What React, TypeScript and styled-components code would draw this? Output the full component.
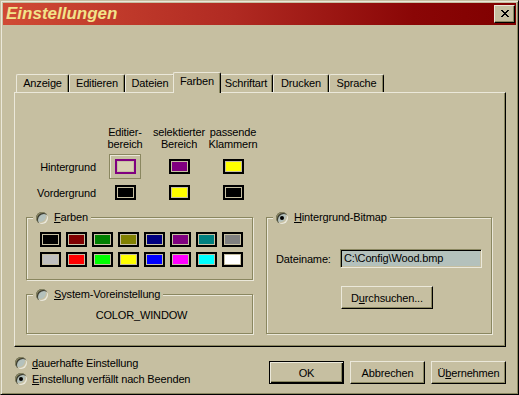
import React from 'react';
import styled, { createGlobalStyle, css } from 'styled-components';

const C = {
  face: '#c6bfa1',
  hi: '#ebe8da',
  shadow: '#8a8760',
  dark: '#000000',
  field: '#b4c1bc',
};

const Global = createGlobalStyle`
  html, body { margin: 0; padding: 0; background: ${C.face}; }
  body { font-family: "Liberation Sans", Arial, sans-serif; font-size: 11px; letter-spacing: -0.15px; color: #000; }
  * { box-sizing: border-box; }
`;

const Window = styled.div`
  width: 519px;
  height: 395px;
  background: ${C.face};
  border: 1px solid;
  border-color: ${C.face} ${C.dark} ${C.dark} ${C.face};
  box-shadow: inset 1px 1px 0 ${C.hi}, inset -1px -1px 0 ${C.shadow};
  padding: 2px;
  display: flex;
  flex-direction: column;
`;

const TitleBar = styled.div`
  height: 22px;
  flex: none;
  display: flex;
  align-items: center;
  justify-content: space-between;
  padding: 0 1px 0 3px;
  background: linear-gradient(90deg, #d04a34 0%, #b02a22 45%, #8a0606 80%, #800000 100%);
`;

const Title = styled.span`
  font-family: "Liberation Sans", Arial, sans-serif;
  font-weight: bold;
  font-style: italic;
  font-size: 17px;
  letter-spacing: 0;
  color: #f2e38a;
  line-height: 22px;
`;

const RaisedBase = css`
  background: ${C.face};
  border: 1px solid;
  border-color: ${C.hi} ${C.dark} ${C.dark} ${C.hi};
  box-shadow: inset -1px -1px 0 ${C.shadow};
`;

const CloseButton = styled.div`
  ${RaisedBase};
  width: 21px;
  height: 18px;
  display: flex;
  align-items: center;
  justify-content: center;
  padding-bottom: 1px;
`;

const Body = styled.div`
  flex: 1;
  display: flex;
  flex-direction: column;
  padding: 47px 10px 0 11px;
`;

const TabRow = styled.div`
  display: flex;
  align-items: flex-end;
  height: 20px;
  padding-left: 2px;
`;

const Tab = styled.div<{ $w: number; $active?: boolean }>`
  width: ${(p) => p.$w}px;
  height: 18px;
  flex: none;
  background: ${C.face};
  border-top: 1px solid ${C.hi};
  border-left: 1px solid ${C.hi};
  border-right: 1px solid ${C.dark};
  border-radius: 2px 2px 0 0;
  box-shadow: inset -1px 0 0 ${C.shadow};
  text-align: center;
  line-height: 16px;
  white-space: nowrap;
  ${(p) =>
    p.$active &&
    css`
      width: ${p.$w + 4}px;
      height: 21px;
      margin: 0 -2px -1px;
      position: relative;
      z-index: 1;
      line-height: 17px;
    `}
`;

const Panel = styled.div`
  height: 255px;
  flex: none;
  border: 1px solid;
  border-color: ${C.hi} ${C.dark} ${C.dark} ${C.hi};
  box-shadow: inset -1px -1px 0 ${C.shadow};
  padding: 33px 12px 0 11px;
  display: flex;
  flex-direction: column;
`;

const ColorTable = styled.div`
  display: grid;
  grid-template-columns: 72px repeat(3, 54px);
  grid-template-rows: 24px 33px 19px;
  align-items: center;
`;

const ColHead = styled.div`
  text-align: center;
  line-height: 12px;
  align-self: end;
`;

const RowLabel = styled.div`
  text-align: right;
  padding-right: 2px;
`;

const Cell = styled.div`
  display: flex;
  justify-content: center;
  align-items: center;
`;

const FocusBox = styled.div`
  width: 32px;
  height: 25px;
  border: 1px solid ${C.shadow};
  box-shadow: inset 1px 1px 0 ${C.hi};
  display: flex;
  align-items: center;
  justify-content: center;
`;

const Swatch = styled.span<{ $fill: string; $frame?: string }>`
  display: block;
  width: 21px;
  height: 15px;
  border: 2px solid ${(p) => p.$frame ?? C.dark};
  padding: 1px;
  background: ${C.face};
  &::after {
    content: '';
    display: block;
    width: 100%;
    height: 100%;
    background: ${(p) => p.$fill};
  }
`;

const GroupRow = styled.div`
  display: grid;
  grid-template-columns: 227px 226px;
  column-gap: 13px;
  margin-top: 15px;
  align-items: start;
`;

const GroupCol = styled.div`
  display: flex;
  flex-direction: column;
  gap: 14px;
`;

const Group = styled.div<{ $h: number }>`
  position: relative;
  height: ${(p) => p.$h}px;
  border: 1px solid ${C.shadow};
  box-shadow: inset 1px 1px 0 ${C.hi}, 1px 1px 0 ${C.hi};
`;

const Legend = styled.div`
  position: absolute;
  top: -7px;
  left: 6px;
  padding: 0 3px;
  background: ${C.face};
  display: flex;
  align-items: center;
  gap: 6px;
  line-height: 13px;
  white-space: nowrap;
`;

const Radio = styled.span<{ $checked?: boolean }>`
  position: relative;
  display: block;
  flex: none;
  width: 12px;
  height: 12px;
  border-radius: 50%;
  background: ${C.field};
  box-shadow: inset 1px 1px 0 ${C.shadow}, inset 2px 2px 0 #3a3a30,
    inset -1px -1px 0 ${C.hi}, inset -2px -2px 0 ${C.face};
  ${(p) =>
    p.$checked &&
    css`
      &::after {
        content: '';
        position: absolute;
        left: 4px;
        top: 4px;
        width: 4px;
        height: 4px;
        border-radius: 50%;
        background: #000;
      }
    `}
`;

const U = styled.span`
  text-decoration: underline;
`;

const SwatchGrid = styled.div`
  display: grid;
  grid-template-columns: repeat(8, 21px);
  grid-auto-rows: 15px;
  column-gap: 5px;
  row-gap: 5px;
  padding: 14px 0 0 13px;
`;

const SystemValue = styled.div`
  text-align: center;
  padding: 14px 0 0 4px;
  line-height: 13px;
`;

const BitmapBody = styled.div`
  padding: 31px 9px 0 9px;
  display: flex;
  flex-direction: column;
  align-items: flex-start;
`;

const FieldRow = styled.div`
  display: flex;
  align-items: center;
`;

const FieldLabel = styled.span`
  width: 64px;
`;

const TextField = styled.div`
  width: 142px;
  height: 19px;
  background: ${C.field};
  border: 1px solid;
  border-color: ${C.shadow} ${C.hi} ${C.hi} ${C.shadow};
  box-shadow: inset 1px 1px 0 #000, inset -1px -1px 0 ${C.face};
  padding: 0 3px;
  line-height: 17px;
  white-space: nowrap;
`;

const Button = styled.div<{ $w?: number; $default?: boolean }>`
  ${RaisedBase};
  width: ${(p) => p.$w ?? 75}px;
  height: 23px;
  display: flex;
  align-items: center;
  justify-content: center;
  white-space: nowrap;
  ${(p) =>
    p.$default &&
    css`
      border: 1px solid #000;
      box-shadow: inset 1px 1px 0 ${C.hi}, inset -1px -1px 0 #000, inset -2px -2px 0 ${C.shadow};
    `}
`;

const BrowseButton = styled(Button)`
  margin: 18px 0 0 65px;
`;

const Footer = styled.div`
  display: flex;
  justify-content: space-between;
  padding-top: 8px;
`;

const RadioList = styled.div`
  display: flex;
  flex-direction: column;
  padding-left: 1px;
`;

const RadioRow = styled.div`
  display: flex;
  align-items: center;
  gap: 5px;
  height: 16px;
`;

const ButtonBar = styled.div`
  display: flex;
  gap: 6px;
  padding-top: 6px;
`;

const tabs = [
  { label: 'Anzeige', w: 53 },
  { label: 'Editieren', w: 56 },
  { label: 'Dateien', w: 50 },
  { label: 'Farben', w: 44, active: true },
  { label: 'Schriftart', w: 54 },
  { label: 'Drucken', w: 56 },
  { label: 'Sprache', w: 55 },
];

const palette = [
  '#000000', '#800000', '#008000', '#808000', '#000080', '#800080', '#008080', '#808080',
  '#c0c0c0', '#ff0000', '#00ff00', '#ffff00', '#0000ff', '#ff00ff', '#00ffff', '#ffffff',
];

export default function App() {
  return (
    <>
      <Global />
      <Window>
        <TitleBar>
          <Title>Einstellungen</Title>
          <CloseButton>
            <svg width="8" height="7" viewBox="0 0 8 7" shapeRendering="crispEdges">
              <path d="M0 0h2v1h-2zM6 0h2v1h-2zM1 1h2v1h-2zM5 1h2v1h-2zM2 2h4v1h-4zM3 3h2v1h-2zM2 4h4v1h-4zM1 5h2v1h-2zM5 5h2v1h-2zM0 6h2v1h-2zM6 6h2v1h-2z" fill="#000" />
            </svg>
          </CloseButton>
        </TitleBar>
        <Body>
          <TabRow>
            {tabs.map((t) => (
              <Tab key={t.label} $w={t.w} $active={t.active}>
                {t.label}
              </Tab>
            ))}
          </TabRow>
          <Panel>
            <ColorTable>
              <div />
              <ColHead>Editier-<br />bereich</ColHead>
              <ColHead>selektierter<br />Bereich</ColHead>
              <ColHead>passende<br />Klammern</ColHead>
              <RowLabel>Hintergrund</RowLabel>
              <Cell>
                <FocusBox>
                  <Swatch $fill="#d9d0b4" $frame="#800080" />
                </FocusBox>
              </Cell>
              <Cell><Swatch $fill="#800080" /></Cell>
              <Cell><Swatch $fill="#ffff00" /></Cell>
              <RowLabel>Vordergrund</RowLabel>
              <Cell><Swatch $fill="#000000" /></Cell>
              <Cell><Swatch $fill="#ffff00" /></Cell>
              <Cell><Swatch $fill="#000000" /></Cell>
            </ColorTable>
            <GroupRow>
              <GroupCol>
                <Group $h={63}>
                  <Legend>
                    <Radio />
                    <span><U>F</U>arben</span>
                  </Legend>
                  <SwatchGrid>
                    {palette.map((c) => (
                      <Swatch key={c} $fill={c} />
                    ))}
                  </SwatchGrid>
                </Group>
                <Group $h={40}>
                  <Legend>
                    <Radio />
                    <span><U>S</U>ystem-Voreinstellung</span>
                  </Legend>
                  <SystemValue>COLOR_WINDOW</SystemValue>
                </Group>
              </GroupCol>
              <Group $h={117}>
                <Legend>
                  <Radio $checked />
                  <span><U>H</U>intergrund-Bitmap</span>
                </Legend>
                <BitmapBody>
                  <FieldRow>
                    <FieldLabel>Dateiname:</FieldLabel>
                    <TextField>C:\Config\Wood.bmp</TextField>
                  </FieldRow>
                  <BrowseButton $w={92}>
                    <span>D<U>u</U>rchsuchen...</span>
                  </BrowseButton>
                </BitmapBody>
              </Group>
            </GroupRow>
          </Panel>
          <Footer>
            <RadioList>
              <RadioRow>
                <Radio />
                <span><U>d</U>auerhafte Einstellung</span>
              </RadioRow>
              <RadioRow>
                <Radio $checked />
                <span><U>E</U>instellung verfällt nach Beenden</span>
              </RadioRow>
            </RadioList>
            <ButtonBar>
              <Button $default>OK</Button>
              <Button>Abbrechen</Button>
              <Button>
                <span>Ü<U>b</U>ernehmen</span>
              </Button>
            </ButtonBar>
          </Footer>
        </Body>
      </Window>
    </>
  );
}
